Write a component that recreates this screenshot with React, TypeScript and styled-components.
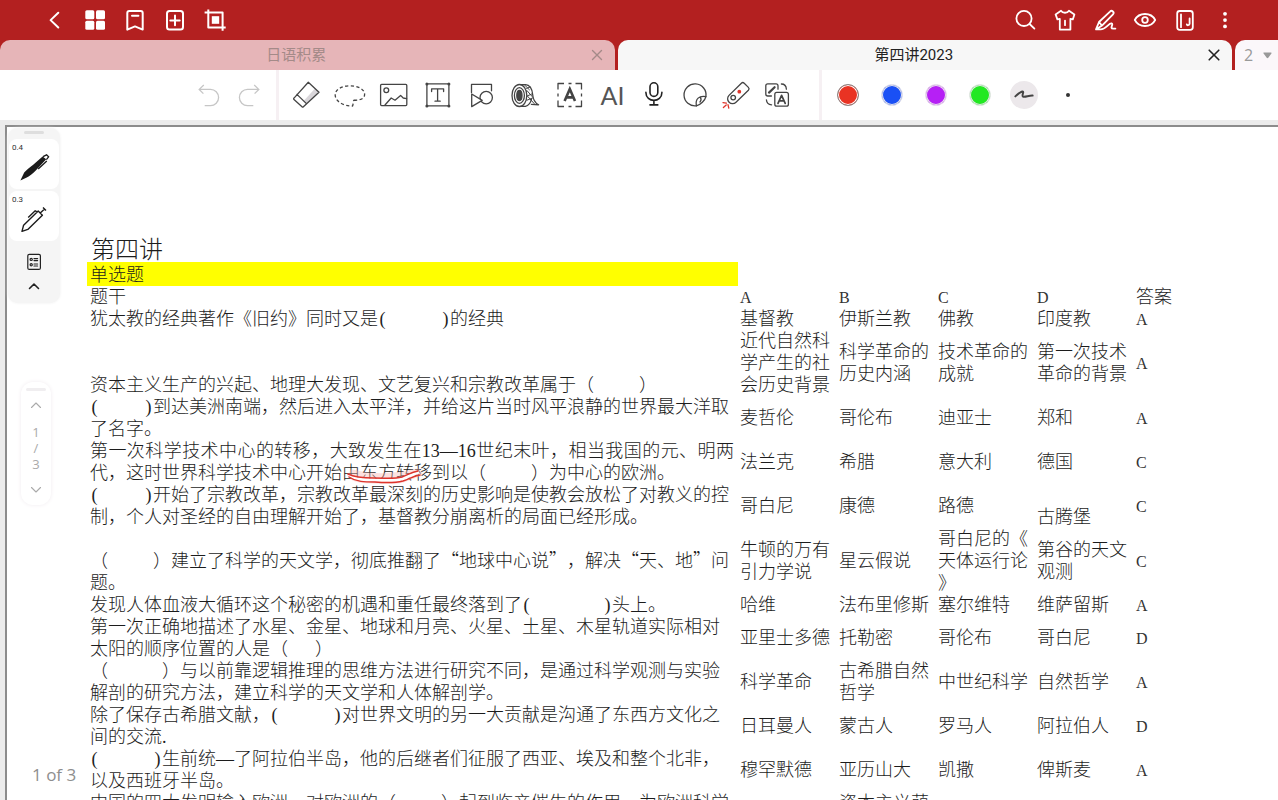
import React from "react";
import styled, { createGlobalStyle } from "styled-components";

const CJK = '"Noto Sans CJK SC", sans-serif';
const PRINT = '"Liberation Serif", "Noto Sans CJK SC", serif';

const GlobalStyle = createGlobalStyle`
  * { box-sizing: border-box; }
  body { margin: 0; background: #fff; font-family: Roboto, ${CJK}; }
  button { border: 0; padding: 0; margin: 0; background: none; font: inherit; color: inherit; cursor: pointer; }
`;

const Shell = styled.div`
  display: flex;
  flex-direction: column;
  height: 100vh;
  overflow: hidden;
`;

/* ---------- top bar ---------- */
const TopBar = styled.header`
  display: flex;
  justify-content: space-between;
  height: 40px;
  flex: none;
  padding: 0 33px 0 35px;
  background: #b32020;
  color: #fff;
`;
const BarGroup = styled.div`
  display: flex;
`;
const BarButton = styled.button`
  display: flex;
  align-items: center;
  justify-content: center;
  width: 40px;
  height: 40px;
`;

const TabStrip = styled.nav`
  display: flex;
  gap: 3px;
  height: 30px;
  flex: none;
  background: #b32020;
`;
const Tab = styled.div<{ $active?: boolean }>`
  display: flex;
  flex: 1;
  border-radius: 10px 10px 0 0;
  background: ${(p) => (p.$active ? "#f7f7f7" : "#e6b5b8")};
  color: ${(p) => (p.$active ? "#222" : "#a48a88")};
`;
const TabLabel = styled.button`
  flex: 1;
  padding-left: 14px;
  font: 15px/30px Roboto, ${CJK};
`;
const TabClose = styled.button`
  display: flex;
  align-items: center;
  justify-content: center;
  width: 36px;
`;
const TabCount = styled.button`
  display: flex;
  align-items: center;
  justify-content: space-between;
  width: 43px;
  padding: 0 6px 0 9px;
  border-radius: 10px 0 0 0;
  background: #fbf7fa;
  color: #999;
  font: 16px/30px "Open Sans", sans-serif;
`;

/* ---------- tool bar ---------- */
const ToolBar = styled.div`
  display: flex;
  gap: 3px;
  height: 50px;
  flex: none;
  background: #f6f0f3;
`;
const ToolGroup = styled.div<{ $kind: "history" | "tools" | "ink" }>`
  display: flex;
  align-items: center;
  background: #fff;
  ${(p) => p.$kind === "history" && "width: 276px; justify-content: flex-end; padding-right: 7px;"}
  ${(p) => p.$kind === "tools" && "width: 540px; padding-left: 5px;"}
  ${(p) => p.$kind === "ink" && "flex: 1; padding-left: 4px;"}
`;
const ToolButton = styled.button<{ $narrow?: boolean }>`
  display: flex;
  align-items: center;
  justify-content: center;
  width: ${(p) => (p.$narrow ? 41 : 44)}px;
  height: 50px;
  color: #444;
`;
const AiLabel = styled.span`
  font: 400 25px/50px Lato, sans-serif;
  color: #555;
`;
const Swatch = styled.span<{ $color: string; $active?: boolean }>`
  width: 22px;
  height: 22px;
  border-radius: 50%;
  border: 1px solid ${(p) => (p.$active ? "#888" : "#e9e6ea")};
  background: ${(p) => p.$color};
  box-shadow: inset 0 0 0 1px ${(p) => (p.$active ? "#fff" : "#e9e6ea")};
`;
const StrokeChip = styled.span`
  display: flex;
  width: 28px;
  height: 28px;
  border-radius: 50%;
  background: #ece8eb;
`;
const SizeDot = styled.span`
  width: 4px;
  height: 4px;
  border-radius: 50%;
  background: #333;
`;

/* ---------- work area ---------- */
const Workspace = styled.main`
  position: relative;
  display: flex;
  flex: 1;
  min-height: 0;
  padding: 5px 0 0 5px;
  background: #ececec;
`;
const Paper = styled.article`
  flex: 1;
  min-width: 0;
  overflow: hidden;
  padding: 111px 0 0 80px;
  border-top: 2px solid #8c8c8c;
  border-left: 2px solid #8c8c8c;
  background: #fff;
  color: #1c1c1c;
  font: 300 18px/22px ${PRINT};
  text-spacing-trim: space-all;
`;
const PaperTitle = styled.h1`
  margin: 0;
  padding-left: 4px;
  font: 300 24px/24px ${PRINT};
`;
const SectionTitle = styled.h2`
  width: 651px;
  margin: 0;
  padding: 2px 0 0 3px;
  background: #ffff00;
  font: 300 18px/22px ${PRINT};
`;
const Quiz = styled.table`
  width: 1096px;
  table-layout: fixed;
  border-collapse: collapse;
`;
const QuestionCol = styled.col`
  width: 651px;
`;
const OptionCol = styled.col`
  width: 99px;
`;
const Cell = styled.td<{ $align?: "top" | "middle" | "bottom" }>`
  padding: 0 0 0 2px;
  text-align: left;
  font-weight: inherit;
  vertical-align: ${(p) => p.$align || "middle"};
`;
const QuestionCell = styled(Cell)`
  padding: 0 4px 0 3px;
`;
const Line = styled.span<{ $justify?: boolean }>`
  display: block;
  height: 22px;
  white-space: ${(p) => (p.$justify ? "normal" : "pre")};
  ${(p) => p.$justify && "text-align: justify; text-align-last: justify;"}
`;
const Blank = styled.span`
  font-family: "Liberation Mono", monospace;
  font-size: 15px;
  line-height: 1;
`;
const Paren = styled.span`
  display: inline-block;
  width: 9px;
  line-height: 20px;
  text-align: center;
`;
const Letter = styled.span`
  font-size: 16px;
  line-height: 1;
  color: #333;
`;
const Quote = styled.span`
  font-family: ${CJK};
  line-height: 1;
`;
const Marked = styled.span`
  position: relative;
`;
const Marker = styled.svg`
  position: absolute;
  left: 2px;
  top: 4px;
`;

/* ---------- floating panels ---------- */
const PenPanel = styled.aside`
  position: absolute;
  left: 8px;
  top: 8px;
  display: flex;
  flex-direction: column;
  align-items: center;
  width: 52px;
  padding: 3px 1px 5px;
  border-radius: 10px;
  background: #f5f5f5;
  box-shadow: 0 0 3px #eee;
`;
const Handle = styled.span<{ $faint?: boolean }>`
  width: 20px;
  height: 3px;
  border-radius: 2px;
  background: ${(p) => (p.$faint ? "#f0eef0" : "#dedede")};
`;
const PenCard = styled.button`
  display: flex;
  flex-direction: column;
  width: 50px;
  height: 50px;
  margin-top: 2px;
  padding: 4px 0 0 3px;
  border-radius: 8px;
  background: #fff;
  color: #333;
  font: 8px/10px Roboto, sans-serif;
  text-align: left;

  &:first-of-type { margin-top: 5px; }
`;
const PanelFooter = styled.div`
  padding-top: 9px;
`;
const PanelButton = styled.button`
  display: flex;
  align-items: center;
  justify-content: center;
  width: 50px;
  height: 24px;
  color: #222;
`;
const PagePanel = styled.aside`
  position: absolute;
  left: 21px;
  top: 262px;
  display: flex;
  flex-direction: column;
  align-items: center;
  width: 30px;
  padding: 6px 0 1px;
  border-radius: 12px;
  background: #fff;
  box-shadow: 0 0 4px #f1ecf0;
  color: #aaa;
  font: 13px/16px "Open Sans", sans-serif;

  button { display: flex; height: 28px; align-items: center; }
`;
const PageNumbers = styled.div`
  display: flex;
  flex-direction: column;
  align-items: center;
  padding: 5px 0 4px;
`;
const PageBadge = styled.span`
  position: absolute;
  left: 32px;
  bottom: 14px;
  color: #8e8e8e;
  font: 17px/22px "Open Sans", sans-serif;
`;

type IconProps = { size?: number; w?: number; children: React.ReactNode };
const Icon = ({ size = 28, w = 2, children }: IconProps) => (
  <svg
    width={size}
    height={size}
    viewBox={`0 0 ${size} ${size}`}
    fill="none"
    stroke="currentColor"
    strokeWidth={w}
    strokeLinecap="round"
    strokeLinejoin="round"
    aria-hidden="true"
  >
    {children}
  </svg>
);

const leftActions: [string, React.ReactNode][] = [
  ["返回", <path d="M17.3 6.7 9.6 14.1l7.7 7.4" />],
  ["缩略图", (
    <g fill="currentColor" stroke="none">
      <rect x="4.3" y="4.3" width="9" height="9" rx="1.5" />
      <rect x="15" y="4.3" width="9" height="9" rx="1.5" />
      <rect x="4.3" y="14.8" width="9" height="9" rx="1.5" />
      <rect x="15" y="14.8" width="9" height="9" rx="1.5" />
    </g>
  )],
  ["书签", <path d="M8.3 5h11.4a2 2 0 0 1 2 2v16.6L14 20.4l-7.7 3.2V7a2 2 0 0 1 2-2zM11 9.8h6.4" />],
  ["添加", <><rect x="6" y="5" width="16" height="18.6" rx="2.5" /><path d="M14 9.6v9.6M9.3 14.4h9.4" /></>],
  ["裁剪", <><path d="M3.6 6.4h18v18.4M7.3 3.4v18h17.4" strokeLinecap="butt" /><rect x="10.8" y="10.2" width="7.4" height="7.6" fill="currentColor" stroke="none" /></>],
];

const rightActions: [string, React.ReactNode][] = [
  ["搜索", <><circle cx="13" cy="12.4" r="7.6" /><path d="m18.6 18 4.8 4.6" /></>],
  ["主题", <path d="M10 4.8c1.6 2.6 6.4 2.6 8 0l5.4 3.6-1.6 5-2.4-.6v10.8H8.8V12.8l-2.4.6-1.8-5zM14 14.6v4.6" />],
  ["书写", <><path d="M5 23.4 8 16 19 5.6a2 2 0 0 1 3 2.8L11 19.6zM8 16l3 3.6M5 23.4h4.6c5.4 0 8.4-6.8 11-6 2.4.8-2.6 5.2 1.6 5.2h2.2" /></>],
  ["查看", <><path d="M3.8 14c4.2-8 16.2-8 20.4 0-4.2 8-16.2 8-20.4 0z" /><circle cx="14" cy="14" r="2.8" /></>],
  ["目录", <><rect x="6.2" y="5" width="15.6" height="18.8" rx="2.5" /><path d="M10 8.4v12.8M18.6 12.4v5.4c0 1.8-2.6 1.8-2.8.6" /></>],
  ["更多", <g fill="currentColor" stroke="none"><circle cx="14" cy="7.8" r="1.9" /><circle cx="14" cy="14.1" r="1.9" /><circle cx="14" cy="20.4" r="1.9" /></g>],
];

const tools: [string, React.ReactNode][] = [
  ["橡皮", <><path d="m29 13-12.4 11.2L8.8 17 18.3 3z" fill="#fff" stroke="none" /><path d="M29 13 16 24.6l-2.6-2.4L25 9.4z" fill="#d9d6da" stroke="none" /><path d="M18.3 3.2 29 13.2 13.4 27.8a1 1 0 0 1-1.4 0l-8-7.2a1 1 0 0 1 0-1.5zM6.9 15.4l9.3 9" /></>],
  ["套索", <path d="M20 21.2c4.6.4 10.6-1 10.6-5.8C30.6 10 23.6 6.8 16 6.8 7.6 6.8 1.2 10.6 1.2 16c0 5.8 7.2 11 17.4 11 .8-1.6.2-4.4 1.4-5.8z" strokeDasharray="3.2 2.4" strokeLinecap="butt" />],
  ["图片", <><rect x="2.6" y="5.4" width="26.2" height="21.2" rx="1" /><circle cx="8.3" cy="11.3" r="2.4" /><path d="m7 26 6.2-7 3.8 2.2 5.6-4.8 2.6 2.6 3.4.6" /></>],
  ["文本框", <><rect x="4.9" y="4.9" width="22" height="22" /><path d="M9.6 12.6V9.8h12v2.8M15.6 9.8v12.4M13 22.2h5.2" /><g fill="currentColor" stroke="none"><circle cx="4.9" cy="4.9" r="1.5" /><circle cx="26.9" cy="4.9" r="1.5" /><circle cx="4.9" cy="26.9" r="1.5" /><circle cx="26.9" cy="26.9" r="1.5" /></g></>],
  ["形状", <><path d="M5.5 13.4V5.4h20v6.4" /><circle cx="20.2" cy="18.6" r="6.2" /><path d="m5.7 15 10.5 6.4-10.5 6.2z" fill="#fff" /></>],
  ["胶带", <><path d="M9.4 5.6h6.200c4 0 6.600 4.400 7 9.600.4 5 2.200 8.600 6 10.600l-7.200-.4M9.400 27.400h6c3-.8 5.200-3.600 6-7" /><ellipse cx="9.4" cy="16.5" rx="7.4" ry="11" fill="#fff" /><ellipse cx="9.4" cy="16.5" rx="5" ry="7.8" /><ellipse cx="9.4" cy="16.5" rx="2.6" ry="5" fill="currentColor" /><path d="m16.600 9.400 3.600-1.400M17.200 17l5.400-2.400M17 21.200l6-2.400M14.400 5.800l5 5M17 11.600l5.200 6M17.400 17l6.800 7.600" strokeWidth="1" /></>],
  ["文字识别", <><path d="M4 10.5V4.5h6M21.5 4.500h6v6M27.500 21.500v6h-6M10 27.500H4v-6M4 14.500v3M27.500 14.500v3M14.500 4.500h3M14.500 27.500h3" strokeLinecap="butt" /><path d="m10.600 22 5.200-12 5.200 12M12.400 18.400h6.800" strokeWidth="2.6" strokeLinecap="butt" strokeLinejoin="miter" /></>],
];

const compactTools: [string, React.ReactNode][] = [
  ["录音", <g stroke="#222" strokeWidth="1.6"><rect x="12" y="3.8" width="7.8" height="13.6" rx="3.9" /><path d="M7.900 13.400c0 10.600 16 10.600 16 0M15.900 21.400v4.400M12 25.900h7.800" /></g>],
  ["贴纸", <><path d="M17.4 26.8A11 11 0 1 1 26.900 17.600C26 21.400 21.600 26 17.400 26.800z" /><path d="M17.400 26.800c-1.400-7 2.800-10.400 9.500-9.200M21.400 18.400c1 1.600 1 3-.4 4.600" /></>],
  ["激光笔", <><path d="M9 16.4 21.4 4.200a2 2 0 0 1 2.800 0l4.200 4.200a2 2 0 0 1 0 2.800L16 23.200a4.800 4.800 0 0 1-7-6.800z" /><circle cx="13.2" cy="18.6" r="2.3" /><circle cx="19.3" cy="12.7" r="1.9" fill="#e0352b" stroke="none" /><path d="m3 23.600 3.400.6M8 25.600l.8 3.600M6.200 26l-2.800 2.600" stroke="#e0352b" /></>],
  ["转换", <><rect x="13.8" y="13.4" width="13.6" height="13.8" rx="2" /><path d="M10.400 17H6.800a2 2 0 0 1-2-2V6.800a2 2 0 0 1 2-2H15a2 2 0 0 1 2 2v3.400M20.400 5c3 0 4.800 2 5 5.200M5.400 20.800c.2 3 2 4.800 5.200 5" /><path d="m8 13.600 5.600-5.400" strokeWidth="2.2" /><path d="m17 24.400 3.600-8 3.600 8M18.200 21.800H23" strokeWidth="1.7" /></>],
];

const swatches: [string, string][] = [
  ["红色", "#e93323"],
  ["蓝色", "#1a50f5"],
  ["紫色", "#b620f5"],
  ["绿色", "#22e822"],
];

type Row = {
  q: React.ReactNode[];
  options: string[][];
  answer: string;
  bottomOption?: number;
  justify?: boolean;
};

/* Brackets and blanks take half the width of a Chinese character, quotes the full width. */
const mix = (text: string) =>
  text.split(/( +|[()]|[A-Z]|[“”])/).map((part, i) => {
    if (/^ +$/.test(part)) return <Blank key={i}>{part}</Blank>;
    if (/^[()]$/.test(part)) return <Paren key={i}>{part}</Paren>;
    if (/^[A-Z]$/.test(part)) return <Letter key={i}>{part}</Letter>;
    if (/^[“”]$/.test(part)) return <Quote key={i}>{part}</Quote>;
    return part;
  });

const markedLine = (
  <>
    代，这时世界科学技术中心开始
    <Marked>
      由东方转移
      <Marker width="84" height="20" viewBox="0 0 84 20" fill="none" aria-hidden="true">
        <path d="M6 8c3 5 12 6 24 6 14 1 20 1 29-1 7-2 11-5 17-6M8 5c18 5 40 5 66-1" stroke="#f7b5b0" strokeWidth="5" strokeLinecap="round" opacity=".4" />
        <path d="M5 8c4 4 14 5 24 5 14 0 22 1 29-1 6-2 10-5 17-7" stroke="#fff" strokeWidth="3" />
        <path d="M4 7c6 3 16 4 26 4 14 0 20 1 28-1 6-2 9-5 16-6M5 10c7 5 16 5 26 5 12 1 20 1 28-1 7-2 10-5 17-6" stroke="#dd342c" strokeWidth="1.5" strokeLinecap="round" />
      </Marker>
    </Marked>
    到以（{mix("     ")}）为中心的欧洲。
  </>
);

const rows: Row[] = [
  { q: ["犹太教的经典著作《旧约》同时又是(      )的经典"], options: [["基督教"], ["伊斯兰教"], ["佛教"], ["印度教"]], answer: "A" },
  { q: ["资本主义生产的兴起、地理大发现、文艺复兴和宗教改革属于（     ）"], options: [["近代自然科", "学产生的社", "会历史背景"], ["科学革命的", "历史内涵"], ["技术革命的", "成就"], ["第一次技术", "革命的背景"]], answer: "A" },
  { q: ["(     )到达美洲南端，然后进入太平洋，并给这片当时风平浪静的世界最大洋取", "了名字。"], options: [["麦哲伦"], ["哥伦布"], ["迪亚士"], ["郑和"]], answer: "A" },
  { q: ["第一次科学技术中心的转移，大致发生在13—16世纪末叶，相当我国的元、明两", markedLine], options: [["法兰克"], ["希腊"], ["意大利"], ["德国"]], answer: "C", justify: true },
  { q: ["(     )开始了宗教改革，宗教改革最深刻的历史影响是使教会放松了对教义的控", "制，个人对圣经的自由理解开始了，基督教分崩离析的局面已经形成。"], options: [["哥白尼"], ["康德"], ["路德"], ["古腾堡"]], answer: "C", bottomOption: 3 },
  { q: ["（     ）建立了科学的天文学，彻底推翻了“地球中心说”，解决“天、地”问", "题。"], options: [["牛顿的万有", "引力学说"], ["星云假说"], ["哥白尼的《", "天体运行论", "》"], ["第谷的天文", "观测"]], answer: "C" },
  { q: ["发现人体血液大循环这个秘密的机遇和重任最终落到了(        )头上。"], options: [["哈维"], ["法布里修斯"], ["塞尔维特"], ["维萨留斯"]], answer: "A" },
  { q: ["第一次正确地描述了水星、金星、地球和月亮、火星、土星、木星轨道实际相对", "太阳的顺序位置的人是（   ）"], options: [["亚里士多德"], ["托勒密"], ["哥伦布"], ["哥白尼"]], answer: "D" },
  { q: ["（      ）与以前靠逻辑推理的思维方法进行研究不同，是通过科学观测与实验", "解剖的研究方法，建立科学的天文学和人体解剖学。"], options: [["科学革命"], ["古希腊自然", "哲学"], ["中世纪科学"], ["自然哲学"]], answer: "A" },
  { q: ["除了保存古希腊文献，(      )对世界文明的另一大贡献是沟通了东西方文化之", "间的交流."], options: [["日耳曼人"], ["蒙古人"], ["罗马人"], ["阿拉伯人"]], answer: "D" },
  { q: ["(      )生前统—了阿拉伯半岛，他的后继者们征服了西亚、埃及和整个北非，", "以及西班牙半岛。"], options: [["穆罕默德"], ["亚历山大"], ["凯撒"], ["俾斯麦"]], answer: "A" },
  { q: ["中国的四大发明输入欧洲，对欧洲的（     ）起到临产催生的作用，为欧洲科学"], options: [[], ["资本主义萌"], [], []], answer: "" },
];

export default function App() {
  return (
    <Shell>
      <GlobalStyle />
      <TopBar>
        <BarGroup>
          {leftActions.map(([label, art]) => (
            <BarButton key={label} aria-label={label}><Icon>{art}</Icon></BarButton>
          ))}
        </BarGroup>
        <BarGroup>
          {rightActions.map(([label, art]) => (
            <BarButton key={label} aria-label={label}><Icon w={1.8}>{art}</Icon></BarButton>
          ))}
        </BarGroup>
      </TopBar>

      <TabStrip>
        <Tab>
          <TabLabel>日语积累</TabLabel>
          <TabClose aria-label="关闭"><Icon size={12} w={1.4}><path d="m1.5 1.5 9 9M10.5 1.5l-9 9" /></Icon></TabClose>
        </Tab>
        <Tab $active>
          <TabLabel>第四讲2023</TabLabel>
          <TabClose aria-label="关闭"><Icon size={12} w={1.6}><path d="m1.2 1.2 9.6 9.6M10.8 1.2l-9.6 9.6" /></Icon></TabClose>
        </Tab>
        <TabCount aria-label="标签页 2">
          2
          <svg width="9" height="7" viewBox="0 0 9 7" aria-hidden="true"><path d="M1 .5h7c.6 0 .8.5.4 1L5.3 5.8c-.4.6-1.2.6-1.6 0L.6 1.500C.2 1 .4.5 1 .5z" fill="#999" /></svg>
        </TabCount>
      </TabStrip>

      <ToolBar>
        <ToolGroup $kind="history">
          <BarButton aria-label="撤销"><svg width="32" height="32" viewBox="0 0 32 32" fill="none" stroke="#c6c6c6" strokeWidth="1.3"><path d="m10.8 6-4.600 4.400 4.200 4.200M6.200 10.400h11.300a8.100 8.100 0 0 1 0 16.200h-5.800" /></svg></BarButton>
          <BarButton aria-label="重做"><svg width="32" height="32" viewBox="0 0 32 32" fill="none" stroke="#c6c6c6" strokeWidth="1.3"><path d="m21.2 6 4.600 4.400-4.200 4.200M25.800 10.400H14.500a8.100 8.100 0 0 0 0 16.200h5.800" /></svg></BarButton>
        </ToolGroup>
        <ToolGroup $kind="tools">
          {tools.map(([label, art]) => (
            <ToolButton key={label} aria-label={label}><Icon size={32} w={1.3}>{art}</Icon></ToolButton>
          ))}
          <ToolButton $narrow><AiLabel>AI</AiLabel></ToolButton>
          {compactTools.map(([label, art]) => (
            <ToolButton key={label} $narrow aria-label={label}><Icon size={32} w={1.3}>{art}</Icon></ToolButton>
          ))}
        </ToolGroup>
        <ToolGroup $kind="ink">
          {swatches.map(([label, color], i) => (
            <ToolButton key={label} aria-label={label}><Swatch $color={color} $active={i === 0} /></ToolButton>
          ))}
          <ToolButton aria-label="线型">
            <StrokeChip><Icon w={2}><path d="M5.4 15.400c2.600-2.600 5.400-4.800 7.200-5 1.800.2-1.200 4.400.4 5.200 2 .8 6-1.200 9.600-1" /></Icon></StrokeChip>
          </ToolButton>
          <ToolButton aria-label="粗细"><SizeDot /></ToolButton>
        </ToolGroup>
      </ToolBar>

      <Workspace>
        <Paper lang="zh-CN">
          <PaperTitle>第四讲</PaperTitle>
          <SectionTitle>单选题</SectionTitle>
          <Quiz>
            <colgroup>
              <QuestionCol />
              <OptionCol /><OptionCol /><OptionCol /><OptionCol />
              <col />
            </colgroup>
            <thead>
              <tr>
                <QuestionCell as="th"><Line>题干</Line></QuestionCell>
                {["A", "B", "C", "D", "答案"].map((h) => (
                  <Cell as="th" key={h}><Line>{mix(h)}</Line></Cell>
                ))}
              </tr>
            </thead>
            <tbody>
              {rows.map((row, r) => (
                <tr key={r}>
                  <QuestionCell $align="bottom">
                    {row.q.map((line, i) => (
                      <Line key={i} $justify={row.justify && i === 0}>
                        {typeof line === "string" ? mix(line) : line}
                      </Line>
                    ))}
                  </QuestionCell>
                  {row.options.map((lines, c) => (
                    <Cell key={c} $align={row.bottomOption === c ? "bottom" : "middle"}>
                      {lines.map((line) => <Line key={line}>{line}</Line>)}
                    </Cell>
                  ))}
                  <Cell>{row.answer && <Line>{mix(row.answer)}</Line>}</Cell>
                </tr>
              ))}
            </tbody>
          </Quiz>
        </Paper>

        <PenPanel>
          <Handle />
          <PenCard>
            0.4
            <svg width="44" height="32" viewBox="0 0 44 32" fill="none" aria-hidden="true">
              <path d="M8.4 27.4 12.2 19.6c3-3.600 6-5.400 9-7.800L30.600 3.400l3.600 2.800-10.400 11.200c-3 3-6.400 5.800-9.600 7.400z" fill="#1b1b1b" />
              <path d="m31 3.600 3.600-1.800 2 2-2.200 2.800M34.800 8l-8.600 8" stroke="#1b1b1b" strokeWidth="1.3" />
            </svg>
          </PenCard>
          <PenCard>
            0.3
            <svg width="44" height="32" viewBox="0 0 44 32" fill="none" stroke="#1b1b1b" strokeWidth="1.4" strokeLinejoin="round" aria-hidden="true">
              <path d="M10 26.400 11.600 20.200 26.200 6l4.200 4.200-14.600 14.200zM28.200 8l4.400-4M31 2.400l3 3M16.200 12.400l7-6.600 2 1" />
            </svg>
          </PenCard>
          <PanelFooter>
            <PanelButton aria-label="笔列表">
              <Icon size={18} w={1.2}><rect x="2.8" y="1.4" width="12.6" height="15" rx="1.5" /><circle cx="6.2" cy="6.4" r="1.1" /><circle cx="6.2" cy="11.8" r="1.1" /><path d="M9 5.6h3.600M9 7.600h3.600M9 11h3.600M9 13h3.600" /></Icon>
            </PanelButton>
            <PanelButton aria-label="收起"><Icon size={12} w={1.6}><path d="m1.5 8.500 4.500-4.500 4.500 4.500" /></Icon></PanelButton>
          </PanelFooter>
        </PenPanel>

        <PagePanel>
          <Handle $faint />
          <button aria-label="上一页"><Icon size={12} w={1.1}><path d="m1.5 8.500 4.500-4.500 4.500 4.500" /></Icon></button>
          <PageNumbers><span>1</span><span>/</span><span>3</span></PageNumbers>
          <button aria-label="下一页"><Icon size={12} w={1.1}><path d="m1.5 3.500 4.500 4.500 4.500-4.500" /></Icon></button>
        </PagePanel>

        <PageBadge>1 of 3</PageBadge>
      </Workspace>
    </Shell>
  );
}
